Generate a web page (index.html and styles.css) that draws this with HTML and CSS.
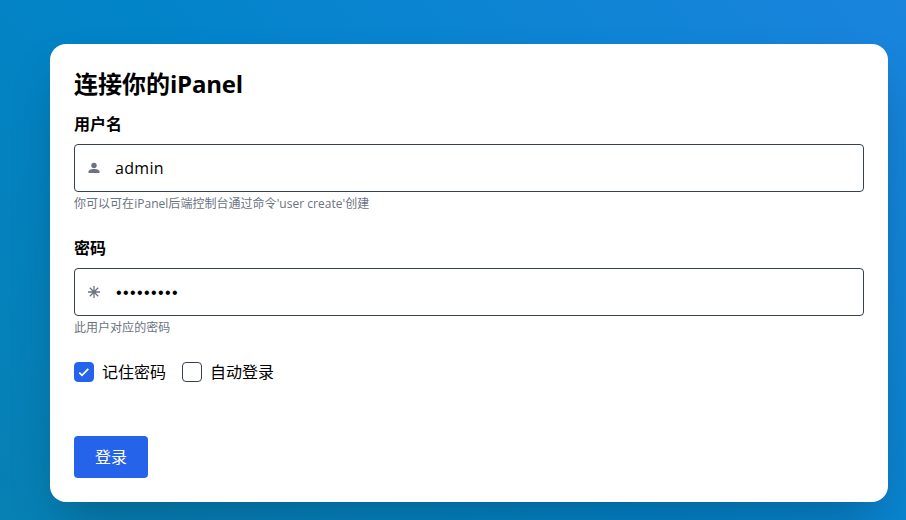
FILE: index.html
```html
<!DOCTYPE html>
<html lang="zh-CN">
<head>
<meta charset="utf-8">
<title>iPanel</title>
<link rel="stylesheet" href="styles.css">
</head>
<body>
<main class="card">
  <h1 class="title">连接你的<span class="title-latin">iPanel</span></h1>
  <form class="form">
    <div class="field">
      <label class="label" for="user">用户名</label>
      <div class="control">
        <svg class="icon" viewBox="0 0 12 12" aria-hidden="true"><circle cx="6" cy="3.500" r="2.700"/><path d="M.5 11V9.600C.5 7.900 3.200 7 6 7s5.500.9 5.500 2.600V11z"/></svg>
        <input class="input" id="user" type="text" value="admin">
      </div>
      <p class="help">你可以可在iPanel后端控制台通过命令'user create'创建</p>
    </div>
    <div class="field">
      <label class="label" for="pass">密码</label>
      <div class="control">
        <svg class="icon icon-line" viewBox="0 0 12 12" aria-hidden="true"><path d="M6 0v12M0 6h12M1.800 1.800l8.400 8.400M10.200 1.800l-8.400 8.400"/></svg>
        <span class="dots">•••••••••</span>
      </div>
      <p class="help">此用户对应的密码</p>
    </div>
    <div class="options">
      <label class="option"><span class="box checked"><svg class="check" viewBox="0 0 18 18" aria-hidden="true"><path d="M4.300 9.600l2.700 2.700 6.300-6.500"/></svg></span>记住密码</label>
      <label class="option"><span class="box"></span>自动登录</label>
    </div>
    <button class="submit" type="button">登录</button>
  </form>
</main>
</body>
</html>
```
FILE: styles.css
```css
* {
  box-sizing: border-box;
}

body {
  margin: 0;
  height: 520px;
  overflow: hidden;
  padding: 44px 18px 18px 50px;
  background: linear-gradient(45deg, #0780b3 0%, #0284c9 45%, #1a84dd 100%);
  font-family: "Open Sans", "Noto Sans CJK SC", sans-serif;
  font-size: 16px;
  line-height: 24px;
  color: #000;
}

.card {
  height: 458px;
  padding: 24px;
  border-radius: 16px;
  background: #fff;
  box-shadow: 0 25px 50px -12px rgba(0, 0, 0, 0.25);
}

.title {
  margin: 0 0 12px;
  font-size: 24px;
  line-height: 32px;
  font-weight: 700;
}

.title-latin {
  letter-spacing: -0.2px;
}

.field {
  margin-bottom: 24px;
}

.label {
  display: block;
  height: 24px;
  margin-bottom: 8px;
  font-weight: 700;
}

.control {
  display: flex;
  align-items: center;
  height: 48px;
  padding: 0 13px;
  border: 1px solid #374151;
  border-radius: 4px;
}

.icon {
  width: 12px;
  height: 12px;
  margin-right: 15px;
  fill: #6b7280;
}

.icon-line {
  fill: none;
  stroke: #6b7280;
  stroke-width: 1.3;
}

.input {
  flex: 1;
  padding: 0;
  border: 0;
  outline: 0;
  background: none;
  font: inherit;
  letter-spacing: 0.3px;
  color: inherit;
}

.dots {
  padding: 1px 0 0 1px;
  font-family: "Liberation Sans", sans-serif;
  font-size: 16px;
  letter-spacing: 1.4px;
}

.help {
  margin: 4px 0 0;
  font-size: 12px;
  line-height: 16px;
  letter-spacing: 0.03px;
  color: #6b7280;
}

.options {
  display: flex;
  gap: 16px;
  height: 24px;
}

.option {
  display: flex;
  align-items: center;
  gap: 8px;
}

.box {
  width: 20px;
  height: 20px;
  border: 1px solid #374151;
  border-radius: 4px;
}

.checked {
  border-color: #2563eb;
  background: #2563eb;
}

.check {
  display: block;
  width: 18px;
  height: 18px;
  fill: none;
  stroke: #fff;
  stroke-width: 1.7;
}

.submit {
  display: block;
  width: 74px;
  height: 42px;
  margin-top: 52px;
  padding: 0;
  border: 0;
  border-radius: 4px;
  background: #2563eb;
  color: #fff;
  font: inherit;
}
```
